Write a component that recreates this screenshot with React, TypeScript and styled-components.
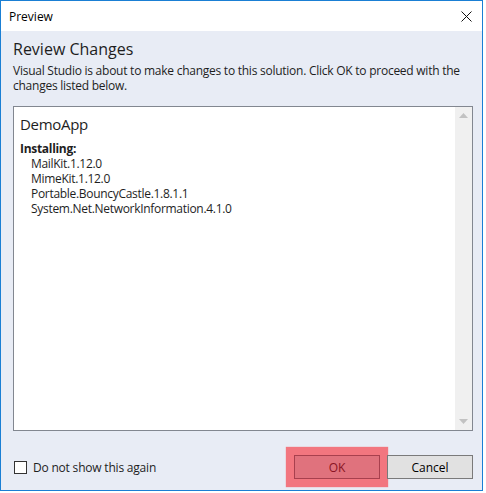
import styled, { createGlobalStyle } from 'styled-components'

const Global = createGlobalStyle`
  html, body {
    margin: 0;
    padding: 0;
    background: #ffffff;
  }
  * {
    box-sizing: border-box;
  }
`

const Window = styled.div`
  width: 483px;
  height: 491px;
  border: 1px solid #1a7fd4;
  display: flex;
  flex-direction: column;
  font-family: "Open Sans", "Noto Sans", sans-serif;
  font-size: 12px;
  color: #1e1e1e;
`

const TitleBar = styled.div`
  height: 30px;
  background: #ffffff;
  display: flex;
  align-items: center;
  justify-content: space-between;
  padding: 0 10px 0 8px;
`

const TitleText = styled.span`
  font-size: 12px;
  color: #000;
`

const CloseBtn = styled.div`
  width: 12px;
  height: 12px;
  display: flex;
  align-items: center;
  justify-content: center;
`

const Body = styled.div`
  flex: 1;
  background: #e8ecf5;
  display: flex;
  flex-direction: column;
  padding: 7px 9px 8px 12px;
`

const Heading = styled.div`
  font-size: 16px;
  line-height: 22px;
  color: #1e1e1e;
`

const Description = styled.div`
  font-size: 12px;
  line-height: 15px;
  letter-spacing: -0.25px;
  margin-top: 3px;
  color: #1e1e1e;
`

const ListBox = styled.div`
  margin-top: 13px;
  height: 325px;
  border: 1px solid #828790;
  background: #ffffff;
  display: flex;
`

const ListContent = styled.div`
  flex: 1;
  padding: 6px 6px;
  letter-spacing: -0.3px;
`

const Project = styled.div`
  font-size: 15px;
  line-height: 22px;
`

const GroupTitle = styled.div`
  margin-top: 6px;
  font-weight: 700;
  line-height: 15px;
`

const Item = styled.div`
  padding-left: 11px;
  line-height: 15px;
`

const ScrollBar = styled.div`
  width: 17px;
  background: #f0f0f0;
  display: flex;
  flex-direction: column;
  justify-content: space-between;
  align-items: center;
  padding: 6px 0;
`

const Footer = styled.div`
  margin-top: auto;
  display: flex;
  align-items: center;
  height: 24px;
  margin-bottom: 3px;
`

const CheckLabel = styled.label`
  display: flex;
  align-items: center;
  gap: 6px;
  padding-left: 1px;
  letter-spacing: -0.2px;
`

const CheckBox = styled.span`
  width: 13px;
  height: 13px;
  border: 1px solid #333;
  background: #fff;
`

const Buttons = styled.div`
  margin-left: auto;
  display: flex;
  gap: 7px;
`

const Button = styled.div<{ $highlight?: boolean }>`
  position: relative;
  width: 86px;
  height: 24px;
  display: flex;
  align-items: center;
  justify-content: center;
  font-size: 12px;
  border: 1px solid ${({ $highlight }) => ($highlight ? '#a8404e' : '#7a7a7a')};
  background: ${({ $highlight }) => ($highlight ? '#e0727d' : '#e1e1e1')};
  color: ${({ $highlight }) => ($highlight ? '#8a1424' : '#000')};
  box-shadow: ${({ $highlight }) => ($highlight ? '0 0 1px 8px #f2767f' : 'none')};
  z-index: ${({ $highlight }) => ($highlight ? 0 : 1)};
`

const Arrow = ({ up }: { up?: boolean }) => (
  <svg width="9" height="5" viewBox="0 0 9 5">
    <path d={up ? 'M0 5 L4.5 0 L9 5 Z' : 'M0 0 L4.5 5 L9 0 Z'} fill="#c2c2c2" />
  </svg>
)

const packages = [
  'MailKit.1.12.0',
  'MimeKit.1.12.0',
  'Portable.BouncyCastle.1.8.1.1',
  'System.Net.NetworkInformation.4.1.0',
]

export default function App() {
  return (
    <>
      <Global />
      <Window>
        <TitleBar>
          <TitleText>Preview</TitleText>
          <CloseBtn>
            <svg width="11" height="11" viewBox="0 0 11 11">
              <path d="M0.5 0.5 L10.5 10.5 M10.5 0.5 L0.5 10.5" stroke="#111" strokeWidth="1" />
            </svg>
          </CloseBtn>
        </TitleBar>
        <Body>
          <Heading>Review Changes</Heading>
          <Description>
            Visual Studio is about to make changes to this solution. Click OK to proceed with the changes listed below.
          </Description>
          <ListBox>
            <ListContent>
              <Project>DemoApp</Project>
              <GroupTitle>Installing:</GroupTitle>
              {packages.map(p => (
                <Item key={p}>{p}</Item>
              ))}
            </ListContent>
            <ScrollBar>
              <Arrow up />
              <Arrow />
            </ScrollBar>
          </ListBox>
          <Footer>
            <CheckLabel>
              <CheckBox />
              Do not show this again
            </CheckLabel>
            <Buttons>
              <Button $highlight>OK</Button>
              <Button>Cancel</Button>
            </Buttons>
          </Footer>
        </Body>
      </Window>
    </>
  )
}
